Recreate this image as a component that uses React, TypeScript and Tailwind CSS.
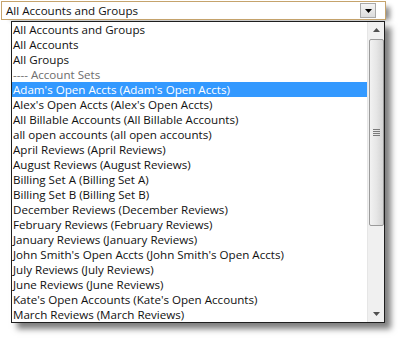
const items: { t: string; kind?: 'hdr' | 'sel' }[] = [
  { t: 'All Accounts and Groups' },
  { t: 'All Accounts' },
  { t: 'All Groups' },
  { t: '---- Account Sets', kind: 'hdr' },
  { t: "Adam's Open Accts (Adam's Open Accts)", kind: 'sel' },
  { t: "Alex's Open Accts (Alex's Open Accts)" },
  { t: 'All Billable Accounts (All Billable Accounts)' },
  { t: 'all open accounts (all open accounts)' },
  { t: 'April Reviews (April Reviews)' },
  { t: 'August Reviews (August Reviews)' },
  { t: 'Billing Set A (Billing Set A)' },
  { t: 'Billing Set B (Billing Set B)' },
  { t: 'December Reviews (December Reviews)' },
  { t: 'February Reviews (February Reviews)' },
  { t: 'January Reviews (January Reviews)' },
  { t: "John Smith's Open Accts (John Smith's Open Accts)" },
  { t: 'July Reviews (July Reviews)' },
  { t: 'June Reviews (June Reviews)' },
  { t: "Kate's Open Accounts (Kate's Open Accounts)" },
  { t: 'March Reviews (March Reviews)' },
];

export default function App() {
  return (
    <div
      className="w-[402px] h-[338px] bg-white overflow-hidden text-[11.6px] text-[#111]"
      style={{ fontFamily: '"Segoe UI", "Open Sans", "Noto Sans", sans-serif' }}
    >
      {/* combobox */}
      <div className="ml-[1px] mt-[1px] w-[385px] h-[19px] flex items-center border border-[#c5a36c] bg-white shadow-[7px_3px_5px_-3px_rgba(0,0,0,0.45)]">
        <div className="flex-1 pl-[4px] leading-[15px]">All Accounts and Groups</div>
        <div className="mr-[9px] w-[16px] h-[15px] flex items-center justify-center border border-[#a9a9a9] bg-gradient-to-b from-[#f4f4f4] to-[#dcdcdc]">
          <svg width="7" height="4" viewBox="0 0 7 4">
            <path d="M0 0H7L3.5 4Z" fill="#000" />
          </svg>
        </div>
      </div>

      {/* dropdown list */}
      <div className="ml-[11px] mt-[1px] w-[374px] h-[302px] flex border border-[#1e1e1e] bg-white shadow-[6px_6px_6px_rgba(0,0,0,0.5)]">
        <div className="flex-1 flex flex-col">
          {items.map((it) => (
            <div
              key={it.t}
              className={
                'h-[15px] pl-[1px] whitespace-nowrap leading-[15px] ' +
                (it.kind === 'sel' ? 'bg-[#3399ff] text-white' : it.kind === 'hdr' ? 'text-[#6d6d6d]' : '')
              }
            >
              {it.t}
            </div>
          ))}
        </div>

        {/* scrollbar */}
        <div className="w-[17px] flex flex-col items-center bg-[#f0f0f0] border-l border-[#e6e6e6]">
          <div className="h-[16px] flex items-center justify-center">
            <svg width="7" height="4" viewBox="0 0 7 4">
              <path d="M3.5 0L7 4H0Z" fill="#505050" />
            </svg>
          </div>
          <div className="w-[15px] h-[187px] mt-[1px] rounded-[2px] border border-[#9b9b9b] bg-gradient-to-r from-[#f2f2f2] via-[#e6e6e6] to-[#d4d4d4] flex items-center justify-center">
            <div className="flex flex-col gap-[1px]">
              <div className="w-[7px] h-[1px] bg-[#7a7a7a]" />
              <div className="w-[7px] h-[1px] bg-[#7a7a7a]" />
              <div className="w-[7px] h-[1px] bg-[#7a7a7a]" />
              <div className="w-[7px] h-[1px] bg-[#7a7a7a]" />
            </div>
          </div>
          <div className="flex-1" />
          <div className="h-[16px] flex items-center justify-center">
            <svg width="7" height="4" viewBox="0 0 7 4">
              <path d="M0 0H7L3.5 4Z" fill="#505050" />
            </svg>
          </div>
        </div>
      </div>
    </div>
  );
}
